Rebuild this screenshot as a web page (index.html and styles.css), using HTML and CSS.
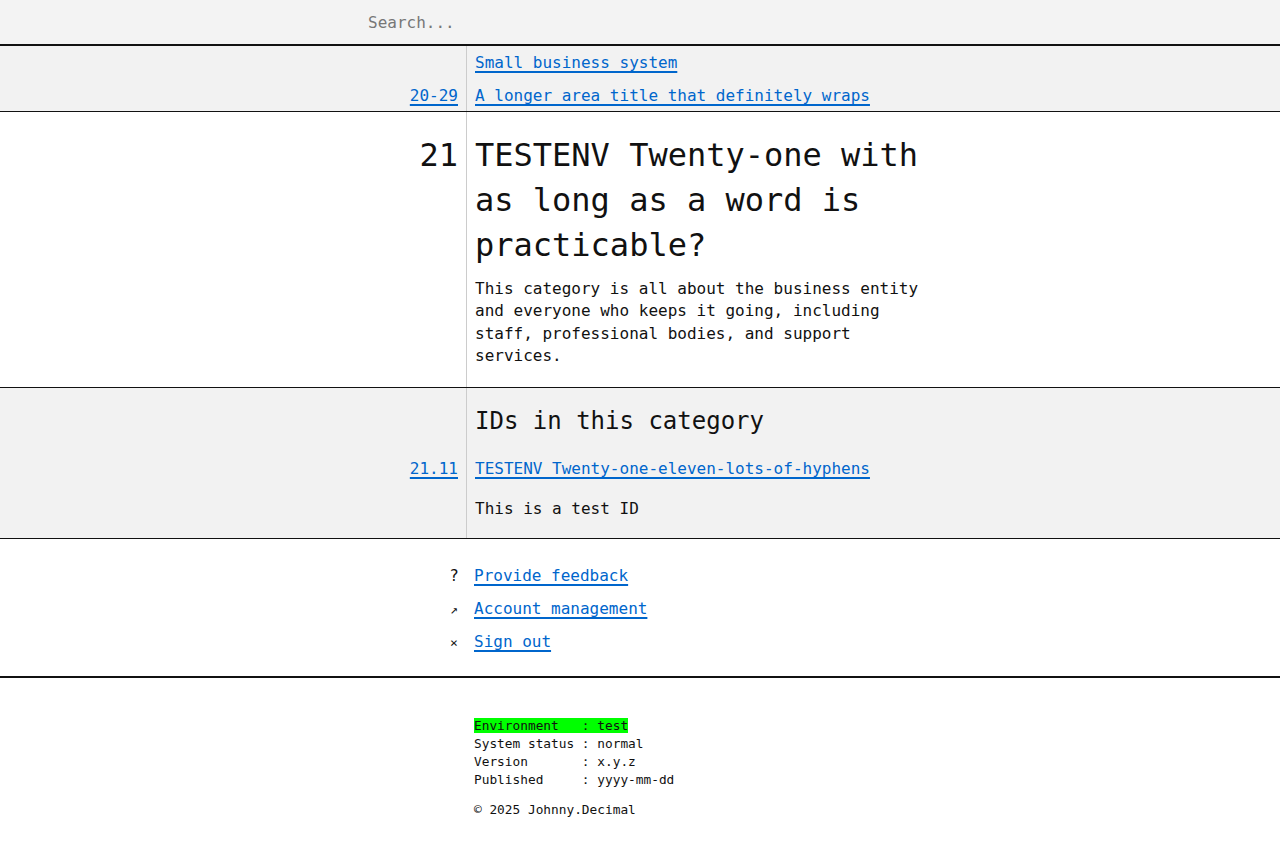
FILE: index.html
```html
<!DOCTYPE html>
<html lang="en">
<head>
<meta charset="utf-8">
<title>TESTENV 21</title>
<link rel="stylesheet" href="styles.css">
</head>
<body>
<header class="topbar">
  <input class="search" type="text" placeholder="Search...">
</header>
<main>
  <section class="row row-area">
    <div class="key key-bottom"><a href="#">20-29</a></div>
    <div class="body area-links">
      <a href="#">Small business system</a>
      <a href="#">A longer area title that definitely wraps</a>
    </div>
  </section>
  <section class="row row-category">
    <div class="key key-big">21</div>
    <div class="body">
      <h1 class="title">TESTENV Twenty-one with as long as a word is practicable?</h1>
      <p class="desc">This category is all about the business entity and everyone who keeps it going, including staff, professional bodies, and support services.</p>
    </div>
  </section>
  <section class="row row-ids">
    <div class="key"></div>
    <div class="body ids-head"><h2 class="subtitle">IDs in this category</h2></div>
    <div class="key key-id"><a href="#">21.11</a></div>
    <div class="body ids-item">
      <a href="#">TESTENV Twenty-one-eleven-lots-of-hyphens</a>
      <p class="id-desc">This is a test ID</p>
    </div>
  </section>
</main>
<nav class="footnav">
  <div class="navitem"><span class="glyph">?</span><a href="#">Provide feedback</a></div>
  <div class="navitem"><span class="glyph small">↗</span><a href="#">Account management</a></div>
  <div class="navitem"><span class="glyph small">×</span><a href="#">Sign out</a></div>
</nav>
<footer class="meta">
<pre class="status"><span class="env">Environment   : test</span>
System status : normal
Version       : x.y.z
Published     : yyyy-mm-dd</pre>
<p class="copy">© 2025 Johnny.Decimal</p>
</footer>
</body>
</html>
```
FILE: styles.css
```css
* { box-sizing: border-box; }
html, body {
  margin: 0;
  padding: 0;
  background: #fff;
  color: #111;
  font-family: "DejaVu Sans Mono", "Liberation Mono", monospace;
  font-size: 16px;
  line-height: 1.4;
}
a {
  color: #0066cc;
  text-decoration: underline;
  text-decoration-thickness: 2px;
  text-underline-offset: 3px;
}
.topbar {
  height: 46px;
  background: #f3f3f3;
  border-bottom: 2px solid #111;
  display: flex;
  align-items: center;
  padding-left: 360px;
}
.search {
  border: none;
  background: transparent;
  font: inherit;
  font-size: 16px;
  color: #111;
  padding: 0 8px;
  width: 600px;
  height: 40px;
  outline: none;
}
.search::placeholder { color: #777; }

.row {
  display: grid;
  grid-template-columns: 467px 1fr;
  border-bottom: 1px solid #111;
}
.key {
  border-right: 1px solid #cccccc;
  text-align: right;
  padding-right: 8px;
}
.body { padding-left: 8px; }

.row-area { background: #f2f2f2; }
.row-area .key, .row-area .body { padding-top: 6px; padding-bottom: 4px; }
.key-bottom { display: flex; align-items: flex-end; justify-content: flex-end; }
.area-links { display: flex; flex-direction: column; gap: 10.6px; align-items: flex-start; }

.row-category .key, .row-category .body { padding-top: 21px; padding-bottom: 20px; }
.key-big { font-size: 32px; line-height: 1.4; }
.title {
  margin: 0;
  font-size: 32px;
  line-height: 1.4;
  font-weight: normal;
  max-width: 460px;
}
.desc { margin: 10px 0 0; max-width: 460px; }

.row-ids { background: #f2f2f2; }
.ids-head { padding-top: 17px; }
.subtitle { margin: 0; font-size: 24px; line-height: 1.4; font-weight: normal; }
.key-id, .ids-item { padding-top: 19px; padding-bottom: 18px; }
.id-desc { margin: 17.6px 0 0; }

.footnav {
  padding: 26px 0 22px 449px;
  border-bottom: 2px solid #111;
  display: flex;
  flex-direction: column;
  gap: 10.6px;
}
.navitem { display: flex; gap: 15px; align-items: baseline; }
.glyph { width: 10px; text-align: center; color: #111; }
.glyph.small { font-size: 13px; }

.meta { padding: 39px 0 30px 474px; font-size: 12.8px; }
.status { margin: 0; font: inherit; line-height: 18px; }
.env { background: #00ff00; }
.copy { margin: 12px 0 0; line-height: 18px; }
```
